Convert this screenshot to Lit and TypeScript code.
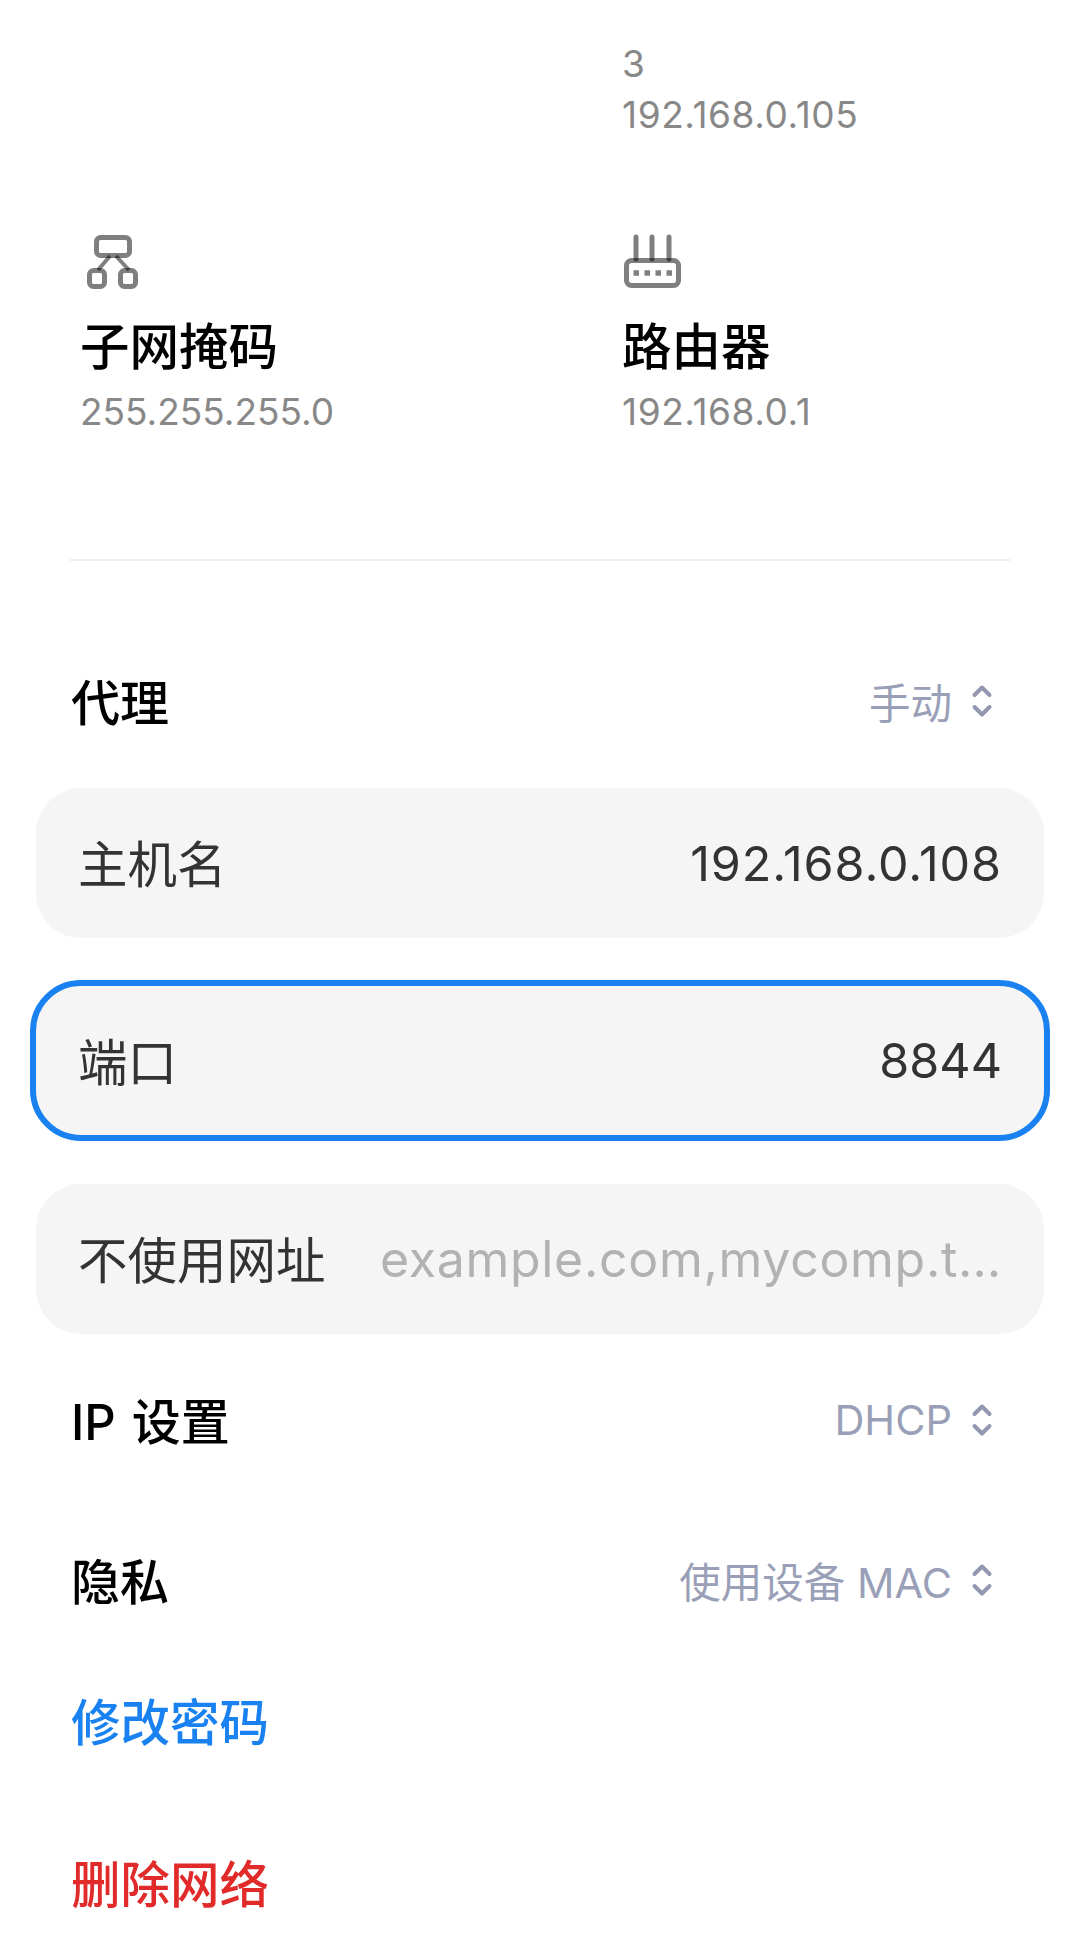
import { LitElement, html, css, svg } from 'lit';
import { customElement } from 'lit/decorators.js';

const chevrons = html`<svg class="chev" width="24" height="34" viewBox="0 0 24 34">
  <path d="M4.5 11 12 3.5l7.5 7.5M4.5 23l7.5 7.5 7.5-7.5" fill="none" stroke="#9398b0" stroke-width="4" stroke-linecap="round" stroke-linejoin="round" />
</svg>`;

const subnetIcon = svg`<g fill="none" stroke="#000" stroke-opacity=".5">
  <rect x="16.5" y="6.5" width="33" height="18" rx="4" stroke-width="5" />
  <rect x="9.5" y="39.5" width="15" height="16" rx="4" stroke-width="5" />
  <rect x="40.5" y="39.5" width="15" height="16" rx="4" stroke-width="5" />
  <path d="M30 25 18 39M36 25l13 14" stroke-width="4" />
</g>`;

const routerIcon = svg`<g fill="none" stroke="#000" stroke-opacity=".5" stroke-width="5">
  <rect x="4.5" y="29.5" width="52" height="25" rx="5" />
  <path d="M14 6v22M30 6v22M47 6v22" stroke-linecap="round" />
  <path d="M11.5 42h5.5M22.5 42H28M33.5 42H39M44.5 42H50" stroke-width="5.5" />
</g>`;

@customElement('app-root')
export class AppRoot extends LitElement {
  static styles = css`
    :host {
      display: block;
      width: 1080px;
      height: 1953px;
      overflow: hidden;
      background: #fff;
      font-family: 'Inter', 'Noto Sans CJK SC', sans-serif;
    }

    .top {
      padding: 38px 0 0 622px;
      height: 231px;
      box-sizing: border-box;
    }

    .sub {
      color: #888;
      font-size: 37px;
      line-height: 51px;
      font-weight: 400;
    }

    /* Inter's 1 is narrower than the reference's */
    .ones {
      letter-spacing: 0.6px;
    }

    .info {
      display: grid;
      grid-template-columns: 542px 1fr;
      padding-left: 80px;
    }

    .info svg {
      display: block;
    }

    .info-title {
      color: #000;
      font-size: 49.5px;
      font-weight: 500;
      line-height: 60px;
      margin-top: 24px;
    }

    .info .sub {
      margin-top: 9px;
    }

    .divider {
      height: 2px;
      background: #efefef;
      margin: 122px 70px 0;
    }

    .row {
      display: flex;
      align-items: center;
      justify-content: space-between;
      padding: 0 86px 0 71px;
      height: 60px;
    }

    .row-title {
      color: #000;
      font-size: 49px;
      font-weight: 500;
      margin-top: -3px;
      word-spacing: 3px;
    }

    .row-value {
      display: flex;
      align-items: center;
      gap: 18px;
      color: #9a9fb8;
      font-size: 41.5px;
      font-weight: 400;
    }

    .proxy-row {
      margin-top: 110px;
    }

    .fields {
      display: flex;
      flex-direction: column;
      gap: 48px;
      margin-top: 57px;
    }

    .field {
      display: flex;
      align-items: center;
      justify-content: space-between;
      height: 150px;
      margin: 0 36px;
      padding: 0 42px;
      border-radius: 45px;
      background: #f5f5f5;
      color: #333;
      font-size: 48.5px;
      font-weight: 400;
      white-space: nowrap;
    }

    .field.focused {
      box-sizing: border-box;
      height: 161px;
      margin: -6px 30px -5px;
      border: 6px solid #1a82f0;
      border-radius: 51px;
    }

    .field .ones {
      letter-spacing: 0.9px;
    }

    .label {
      font-size: 49.5px;
      margin-top: -3px;
    }

    .placeholder {
      color: #b2b2b2;
      font-size: 50px;
      letter-spacing: 0.7px;
    }

    .ip-row {
      margin-top: 56px;
    }

    .privacy-row {
      margin-top: 100px;
    }

    .action {
      font-size: 49.5px;
      font-weight: 500;
      line-height: 60px;
      padding-left: 71px;
    }

    .blue {
      color: #1a82f0;
      margin-top: 83px;
    }

    .red {
      color: #e12b2b;
      margin-top: 102px;
    }
  `;

  render() {
    return html`
      <div class="top">
        <div class="sub">3</div>
        <div class="sub ones">192.168.0.105</div>
      </div>
      <div class="info">
        <div>
          <svg width="70" height="62" viewBox="0 0 70 62">${subnetIcon}</svg>
          <div class="info-title">子网掩码</div>
          <div class="sub">255.255.255.0</div>
        </div>
        <div>
          <svg width="70" height="62" viewBox="0 0 70 62">${routerIcon}</svg>
          <div class="info-title">路由器</div>
          <div class="sub ones">192.168.0.1</div>
        </div>
      </div>
      <div class="divider"></div>
      <div class="row proxy-row">
        <span class="row-title">代理</span>
        <span class="row-value">手动 ${chevrons}</span>
      </div>
      <div class="fields">
        <div class="field"><span class="label">主机名</span><span class="ones">192.168.0.108</span></div>
        <div class="field focused"><span class="label">端口</span><span>8844</span></div>
        <div class="field"><span class="label">不使用网址</span><span class="placeholder">example.com,mycomp.t…</span></div>
      </div>
      <div class="row ip-row">
        <span class="row-title">IP 设置</span>
        <span class="row-value">DHCP ${chevrons}</span>
      </div>
      <div class="row privacy-row">
        <span class="row-title">隐私</span>
        <span class="row-value">使用设备 MAC ${chevrons}</span>
      </div>
      <div class="action blue">修改密码</div>
      <div class="action red">删除网络</div>
    `;
  }
}
